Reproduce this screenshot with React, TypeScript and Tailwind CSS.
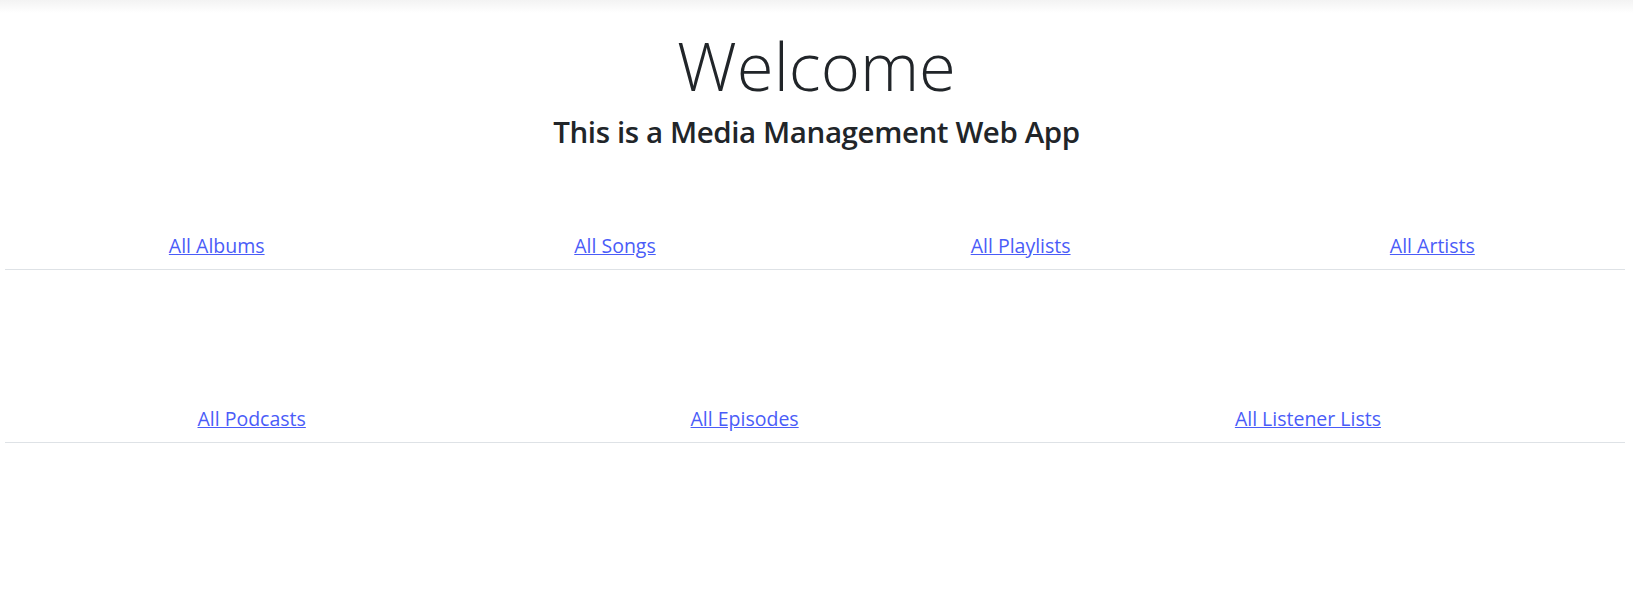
import React from 'react';

const mediaLinks = ['All Albums', 'All Songs', 'All Playlists', 'All Artists'];
const podcastLinks = ['All Podcasts', 'All Episodes', 'All Listener Lists'];

function LinkRow({ links, className }: { links: string[]; className?: string }) {
  return (
    <table className={`ml-[5px] w-[1620px] border-collapse ${className ?? ''}`}>
      <tbody>
        <tr className="border-b border-[#dee2e6]">
          {links.map((label) => (
            <td key={label} className="px-[12px] pt-[12px] pb-[8px] text-center text-[19.5px] leading-[30px]">
              <a href="#" className="text-[#4a5cf8] underline">
                {label}
              </a>
            </td>
          ))}
        </tr>
      </tbody>
    </table>
  );
}

export default function App() {
  return (
    <div className="min-h-screen bg-white font-['Open_Sans',sans-serif] text-[#212529]">
      <div className="h-[13px] bg-gradient-to-b from-[#f3f3f3] to-white" />

      <div className="text-center">
        <h1 className="mt-[12px] text-[67px] font-light leading-[1.2]">Welcome</h1>
        <h3 className="mt-[9px] text-[29.5px] font-semibold leading-[1.2] tracking-[-0.4px]">
          This is a Media Management Web App
        </h3>
      </div>

      <LinkRow links={mediaLinks} className="mt-[69px]" />
      <LinkRow links={podcastLinks} className="mt-[122px]" />
    </div>
  );
}
